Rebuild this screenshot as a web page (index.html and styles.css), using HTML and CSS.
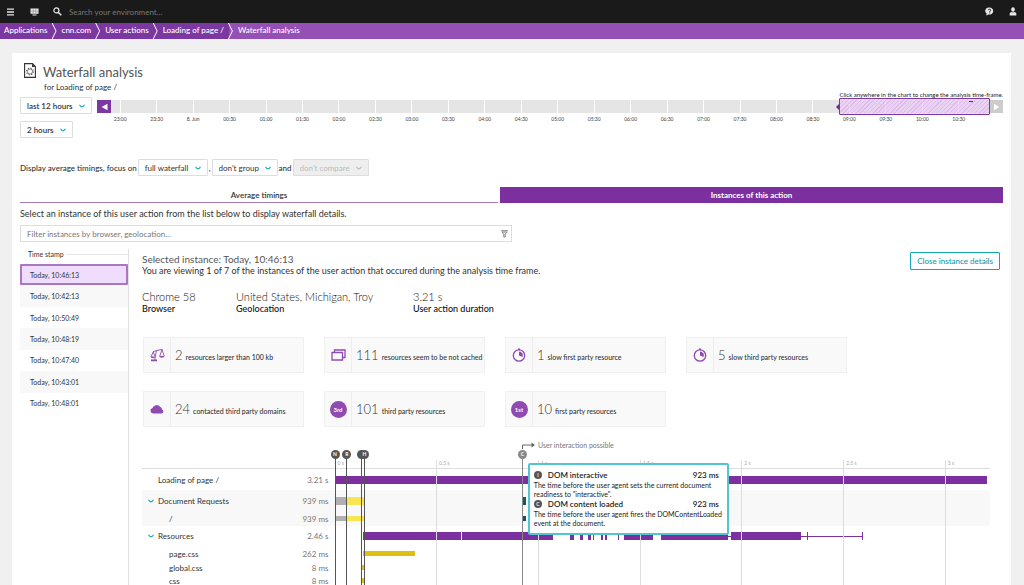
FILE: index.html
```html
<!DOCTYPE html>
<html lang="en">
<head>
<meta charset="utf-8">
<title>Waterfall analysis</title>
<link rel="stylesheet" href="styles.css">
</head>
<body>
<svg class="defs" aria-hidden="true">
  <symbol id="chev" viewBox="0 0 6 4"><path d="M.5.8Q1.6 2.9 3 2.9T5.500.8" fill="none" stroke="currentColor" stroke-width="1.100"/></symbol>
  <symbol id="clock" viewBox="0 0 14 14"><circle cx="7" cy="7.500" r="5.700" fill="none" stroke="currentColor" stroke-width="1.300"/><path d="M6 .5h2v1.500H6z" fill="currentColor"/><path d="M7 3.500v4l3.600 1.500A4 4 0 0 0 7 3.500z" fill="currentColor"/></symbol>
</svg>

<header class="topbar">
  <button class="icon-btn" aria-label="Menu"><svg width="8" height="8" viewBox="0 0 8 8"><path d="M0 1.200h7M0 4h7M0 6.800h7" stroke="currentColor" stroke-width="1.300"/></svg></button>
  <button class="icon-btn dash" aria-label="Dashboards"><svg width="9" height="8" viewBox="0 0 9 8"><path d="M.5.5h8v5.200h-8zM2.500 6.600h4v1h-4z" fill="currentColor"/><path d="M3.200.5v5M5.800.5v5M.5 3.200h8" stroke="#777" stroke-width=".5"/></svg></button>
  <label class="search"><svg width="9" height="9" viewBox="0 0 9 9"><circle cx="3.400" cy="3.400" r="2.500" fill="none" stroke="currentColor" stroke-width="1.200"/><path d="M5.200 5.200 8.300 8.300" stroke="currentColor" stroke-width="1.500"/></svg><input type="text" placeholder="Search your environment..." aria-label="Search your environment"></label>
  <button class="icon-btn" aria-label="Help"><svg width="9" height="9" viewBox="0 0 9 9"><path d="M4.500.5a3.800 3.500 0 1 1-1 6.900L1.200 8.500l.4-2A3.600 3.400 0 0 1 4.500.5z" fill="currentColor"/><path d="M3.300 3.200c0-1.500 2.500-1.400 2.400 0 0 .8-1.100.8-1.100 1.700M4.600 5.400v.9" fill="none" stroke="#1a1a1a" stroke-width=".9"/></svg></button>
  <button class="icon-btn user" aria-label="Account"><svg width="8" height="9" viewBox="0 0 8 9"><ellipse cx="4" cy="2.500" rx="1.800" ry="2.200" fill="currentColor"/><path d="M.7 8.500V6.300Q1 5.200 2.700 5q1.300.8 2.600 0Q7 5.200 7.300 6.300v2.200z" fill="currentColor"/></svg></button>
</header>

<nav class="crumbs" aria-label="Breadcrumb">
  <a href="#">Applications</a><a href="#">cnn.com</a><a href="#">User actions</a><a href="#">Loading of page /</a><a href="#" class="current">Waterfall analysis</a>
</nav>

<main class="panel">
  <div class="title">
    <svg width="12" height="15" viewBox="0 0 12 15"><path d="M.6.6h7.800l3 3v10.800H.6z" fill="none" stroke="#333" stroke-width="1.100"/><path d="M8 .6v3.400h3.400z" fill="#333"/><circle cx="6" cy="8.500" r="2.500" fill="none" stroke="#555" stroke-width=".7"/><circle cx="6" cy="8.500" r="3.400" fill="none" stroke="#555" stroke-width="1.100" stroke-dasharray="1.300 1.370"/></svg>
    <div><h1>Waterfall analysis</h1><p>for Loading of page /</p></div>
  </div>

  <section class="timeframe">
    <div class="ranges">
      <button class="drop">last 12 hours <svg width="6" height="4"><use href="#chev"/></svg></button>
      <button class="drop">2 hours <svg width="6" height="4"><use href="#chev"/></svg></button>
    </div>
    <div class="timeline">
      <button class="step" aria-label="Earlier"><svg width="7" height="8" viewBox="0 0 7 8"><path d="M6.500.8v6.400L.5 4z" fill="currentColor"/></svg></button>
      <div class="track">
        <ol class="ticks"><li>23:00</li><li>23:30</li><li>8. Jun</li><li>00:30</li><li>01:00</li><li>01:30</li><li>02:00</li><li>02:30</li><li>03:00</li><li>03:30</li><li>04:00</li><li>04:30</li><li>05:00</li><li>05:30</li><li>06:00</li><li>06:30</li><li>07:00</li><li>07:30</li><li>08:00</li><li>08:30</li><li>09:00</li><li>09:30</li><li>10:00</li><li>10:30</li></ol>
        <div class="selection"><span class="handle"></span><span class="event"></span></div>
      </div>
      <button class="step off" aria-label="Later"><svg width="7" height="8" viewBox="0 0 7 8"><path d="M1 .8v6.400L6 4z" fill="currentColor"/></svg></button>
      <p class="hint">Click anywhere in the chart to change the analysis time-frame.</p>
    </div>
  </section>

  <form class="focus">
    <label for="f">Display average timings, focus on</label>
    <span class="pick wide"><select id="f"><option>full waterfall</option></select><svg width="6" height="4"><use href="#chev"/></svg></span>
    <label for="g">,</label>
    <span class="pick mid"><select id="g"><option>don't group</option></select><svg width="6" height="4"><use href="#chev"/></svg></span>
    <label for="c">and</label>
    <span class="pick last"><select id="c" disabled><option>don't compare</option></select><svg width="6" height="4"><use href="#chev"/></svg></span>
  </form>

  <div class="tabs" role="tablist">
    <button role="tab" aria-selected="false">Average timings</button>
    <button role="tab" aria-selected="true">Instances of this action</button>
  </div>

  <p class="lead">Select an instance of this user action from the list below to display waterfall details.</p>
  <div class="filter"><input type="text" placeholder="Filter instances by browser, geolocation..." aria-label="Filter instances"><svg width="7" height="8" viewBox="0 0 7 8"><path d="M0 .7h7M1 2h5L4.200 4.200v2.800H2.800V4.200z" fill="none" stroke="#777" stroke-width=".9"/></svg></div>

  <div class="split">
    <aside>
      <h2>Time stamp</h2>
      <ul class="stamps">
        <li class="on">Today, 10:46:13</li><li>Today, 10:42:13</li><li>Today, 10:50:49</li><li>Today, 10:48:19</li><li>Today, 10:47:40</li><li>Today, 10:43:01</li><li>Today, 10:48:01</li>
      </ul>
    </aside>

    <section class="detail">
      <div class="head">
        <div><h3>Selected instance: Today, 10:46:13</h3><p>You are viewing 1 of 7 of the instances of the user action that occured during the analysis time frame.</p></div>
        <button class="close">Close instance details</button>
      </div>

      <dl class="facts">
        <div><dd>Chrome 58</dd><dt>Browser</dt></div>
        <div><dd>United States, Michigan, Troy</dd><dt>Geolocation</dt></div>
        <div><dd>3.21 s</dd><dt>User action duration</dt></div>
      </dl>

      <div class="cards">
        <div class="card"><span class="ico"><svg width="15" height="14" viewBox="0 0 15 14"><path d="M3 3.600 12.200 1.300M6.300 2.800 4.800 12M3.200 3.800 1 9M3.200 3.800 4.800 8M12 1.500 9.800 8M12 1.500 14.200 8" fill="none" stroke="currentColor" stroke-width=".9"/><path d="M.5 8.500h4.700q-.4 1.800-2.300 1.800T.5 8.500zM9 8h5.600q-.4 1.700-2.800 1.700T9 8zM1 11.500h6v1.700H1z" fill="currentColor"/></svg></span><p><b>2</b> resources larger than 100 kb</p></div>
        <div class="card"><span class="ico"><svg width="15" height="12" viewBox="0 0 15 12"><path d="M1 3.500h10.500v7.500H1zM3.500 3V1H14v7.500h-2" fill="none" stroke="currentColor" stroke-width="1.300"/></svg></span><p><b>111</b> resources seem to be not cached</p></div>
        <div class="card"><span class="ico"><svg width="14" height="14"><use href="#clock"/></svg></span><p><b>1</b> slow first party resource</p></div>
        <div class="card"><span class="ico"><svg width="14" height="14"><use href="#clock"/></svg></span><p><b>5</b> slow third party resources</p></div>
        <div class="card"><span class="ico"><svg width="14" height="10" viewBox="0 0 14 10"><path d="M3.200 9.500A2.800 2.800 0 0 1 2.500 4 A4.200 4 0 0 1 10 2.800 3 3 0 0 1 12 5.500 2.100 2.100 0 0 1 11.800 9.500z" fill="currentColor"/></svg></span><p><b>24</b> contacted third party domains</p></div>
        <div class="card"><span class="ico"><span class="disc">3rd</span></span><p><b>101</b> third party resources</p></div>
        <div class="card"><span class="ico"><span class="disc">1st</span></span><p><b>10</b> first party resources</p></div>
      </div>

      <div class="waterfall">
        <div class="rows">
          <div class="axis"></div>
          <div class="row tall"><span class="name">Loading of page /</span><span class="ms">3.21 s</span><div class="lane"><i class="bar" style="left:0%;width:99.500%"></i></div></div>
          <div class="row tall alt"><span class="name"><svg width="6" height="4"><use href="#chev"/></svg>Document Requests</span><span class="ms">939 ms</span><div class="lane"><i class="bar wait" style="left:0%;width:1.800%"></i><i class="bar net" style="left:1.800%;width:2.700%"></i><i class="bar late" style="left:28.700%;width:.5%"></i></div></div>
          <div class="row sub alt"><span class="name">/</span><span class="ms">939 ms</span><div class="lane thin"><i class="bar wait" style="left:0%;width:1.800%"></i><i class="bar net" style="left:1.800%;width:2.700%"></i><i class="bar late" style="left:28.700%;width:.5%"></i></div></div>
          <div class="row res"><span class="name"><svg width="6" height="4"><use href="#chev"/></svg>Resources</span><span class="ms">2.46 s</span><div class="lane"><i class="range" style="left:60%;width:20.500%"></i><i class="bar" style="left:4.300%;width:15%"></i><i class="bar" style="left:19.500%;width:13.800%"></i><i class="bar" style="left:36%;width:.5%"></i><i class="bar" style="left:37.500%;width:.4%"></i><i class="bar" style="left:38.700%;width:.4%"></i><i class="bar" style="left:39.500%;width:.15%"></i><i class="bar" style="left:40.600%;width:.4%"></i><i class="bar" style="left:41.300%;width:.2%"></i><i class="bar" style="left:43.300%;width:.15%"></i><i class="bar" style="left:44.200%;width:4.400%"></i><i class="bar" style="left:49.800%;width:10.300%"></i><i class="bar" style="left:60.500%;width:10.600%"></i><i class="bar" style="left:72.100%;width:.15%"></i><i class="bar" style="left:80.400%;width:.15%"></i></div></div>
          <div class="row sub"><span class="name">page.css</span><span class="ms">262 ms</span><div class="lane thin"><i class="bar css" style="left:4.300%;width:8%"></i></div></div>
          <div class="row leaf"><span class="name">global.css</span><span class="ms">8 ms</span><div class="lane thin"><i class="bar css" style="left:4.100%;width:.6%"></i></div></div>
          <div class="row leaf"><span class="name">css</span><span class="ms">8 ms</span><div class="lane thin"><i class="bar css" style="left:4.100%;width:.6%"></i></div></div>
        </div>
        <div class="plot">
          <span class="grid" style="left:0%">0 s</span><span class="grid" style="left:15.500%">0.5 s</span><span class="grid" style="left:31.050%">1 s</span><span class="grid" style="left:46.600%">1.5 s</span><span class="grid" style="left:62.050%">2 s</span><span class="grid" style="left:77.600%">2.5 s</span><span class="grid" style="left:93.100%">3 s</span>
          <span class="mark" style="left:0%"><b>N</b></span><span class="mark" style="left:1.800%"><b>R</b></span><span class="mark" style="left:4.100%"><b></b></span><span class="mark" style="left:4.500%"><b>H</b></span><span class="mark soft" style="left:28.600%"><b>C</b></span>
          <div class="possible" style="left:28.600%"><svg width="14" height="8" viewBox="0 0 14 8"><path d="M.5 8V4H11" fill="none" stroke="#666" stroke-width="1"/><path d="M9.500 1.600 13 4 9.500 6.400z" fill="#666"/></svg>User interaction possible</div>
          <div class="tip" role="tooltip" style="left:29.500%">
            <h4><span class="dot">I</span>DOM interactive<em>923 ms</em></h4>
            <p>The time before the user agent sets the current document readiness to "interactive".</p>
            <h4><span class="dot">C</span>DOM content loaded<em>923 ms</em></h4>
            <p>The time before the user agent fires the DOMContentLoaded event at the document.</p>
          </div>
        </div>
      </div>
    </section>
  </div>
</main>
</body>
</html>
```
FILE: styles.css
```css
* { box-sizing: border-box; margin: 0; padding: 0; }
html, body { height: 100%; }
body { font: 8px/10px Lato, "Open Sans", sans-serif; color: #333; background: #f0f0f0; display: flex; flex-direction: column; overflow: hidden; }
button, input, select { font: inherit; color: inherit; border: 0; background: none; }
svg { flex: none; display: block; }
ul, ol { list-style: none; }
.defs { position: absolute; width: 0; height: 0; }

.topbar { flex: none; display: flex; align-items: center; height: 23px; padding: 0 7px; background: #1a1a1a; color: #e6e6e6; }
.icon-btn { display: flex; }
.icon-btn.dash { margin-left: 15px; }
.icon-btn.user { margin-left: 15px; }
.search { flex: 1; display: flex; align-items: center; gap: 7px; margin-left: 14px; }
.search input { flex: 1; outline: 0; }
.search input::placeholder { color: #777; }

.crumbs { flex: none; display: flex; height: 16px; background: #9450b5; color: #fff; font-weight: 500; line-height: 15px; }
.crumbs a { position: relative; padding: 0 5px 0 9px; color: inherit; text-decoration: none; background: #7c38a1; }
.crumbs a:first-child { padding-left: 4px; }
.crumbs a::before { content: ""; position: absolute; z-index: 1; left: -1px; top: 0; width: 5px; height: 16px; background: #fff; clip-path: polygon(0 0, 1px 0, 5px 50%, 1px 100%, 0 100%, 4px 50%); }
.crumbs a:first-child::before { display: none; }
.crumbs .current { background: #9450b5; }

.panel { flex: 1; min-height: 0; display: flex; flex-direction: column; margin: 14px 13px 0 12px; padding: 10px 8px 0; background: #fff; }
.title { display: flex; gap: 7px; padding-left: 4px; }
h1 { font-size: 13px; line-height: 19px; font-weight: 400; color: #555; }
.title p { line-height: 10px; padding-left: 1px; }

.timeframe { display: flex; gap: 5px; margin-top: 5px; }
.ranges { display: flex; flex-direction: column; align-items: flex-start; gap: 7px; width: 72px; }
.drop { display: flex; align-items: center; gap: 6px; height: 17px; padding: 0 6px; border: 1px solid #ddd; border-radius: 1px; font-weight: 600; white-space: nowrap; }
.drop svg, .pick svg, .name svg { color: #14a8b5; }
.timeline { position: relative; flex: 1; display: flex; align-items: flex-start; padding-top: 3px; }
.step { flex: none; display: flex; align-items: center; justify-content: center; width: 14px; height: 13px; background: #7c38a1; color: #fff; }
.step.off { width: 13px; background: #ccc; }
.track { position: relative; flex: 1; height: 13px; background: #e5e5e5; }
.ticks { display: grid; grid-template-columns: repeat(24, 1fr); margin: 0 13px 0 -9px; font-size: 5px; line-height: 6px; text-align: center; color: #444; }
.ticks li { padding-top: 16px; background: linear-gradient(#fff, #fff) top / 1px 13px no-repeat; }
.selection { position: absolute; right: 0; top: -2px; width: 17.200%; height: 17px; border: 1px solid #7c38a1; border-radius: 1px; background: repeating-linear-gradient(135deg, #dca9eeaa 0 1px, #ecc9f9aa 1px 3px); }
.handle { position: absolute; left: -4px; top: 5px; border: 3px solid transparent; border-right-color: #6b2a91; border-left: 0; }
.event { position: absolute; right: 16px; top: 2px; width: 4px; height: 1px; background: #444; }
.hint { position: absolute; right: 0; top: -6px; font-size: 6px; line-height: 8px; color: #222; }

.focus { display: flex; align-items: center; margin-top: 21px; font-weight: 500; }
.pick { position: relative; margin: 0 1px; font-weight: 400; }
.pick select { appearance: none; width: 100%; height: 17px; padding: 0 6px; border: 1px solid #ddd; border-radius: 1px; }
.pick svg { position: absolute; right: 7px; top: 7px; }
.pick.wide { width: 70px; }
.pick.mid { width: 66px; }
.pick.last { width: 76px; }
.pick select:disabled { background: #eee; color: #bbb; opacity: 1; }
.pick.last svg { color: #bbb; }

.tabs { display: grid; grid-template-columns: 478fr 503fr; gap: 2px; margin-top: 11px; }
.tabs button { height: 16px; font-weight: 600; border-bottom: 1px solid #a77bbd; }
.tabs button[aria-selected="true"] { background: #7c2f9f; border-color: #7c2f9f; color: #fff; font-weight: 700; }
.lead { margin-top: 5px; font-size: 9px; line-height: 12px; }
.filter { display: flex; align-items: center; width: 50%; height: 17px; margin-top: 5px; padding: 0 3px 0 6px; border: 1px solid #ddd; }
.filter input { flex: 1; outline: 0; }
.filter input::placeholder { color: #777; }

.split { flex: 1; min-height: 0; display: flex; margin-top: 7px; }
aside { flex: none; width: 109px; border-right: 1px solid #e0e0e0; }
h2 { display: flex; align-items: center; gap: 2px; padding-left: 8px; font-size: 7px; line-height: 10px; font-weight: 400; }
h2::after { content: ""; flex: 1; height: 1px; background: #e8e8e8; }
.stamps { display: grid; grid-template-rows: repeat(7, 1fr); height: 150px; margin-top: 5px; font-size: 7px; }
.stamps li { display: flex; align-items: center; padding-left: 10px; }
.stamps li:nth-child(even) { background: #f8f8f8; }
.stamps .on { padding-left: 8px; background: #f0dcfc; border: 2px solid #a877c0; border-radius: 1px; }

.detail { flex: 1; min-width: 0; padding: 4px 13px 0 13px; }
.head { display: flex; justify-content: space-between; align-items: flex-start; }
.head p { font-size: 9px; line-height: 12px; }
h3 { font-size: 10px; line-height: 12px; font-weight: 400; color: #555; }
.close { height: 18px; margin: -1px -10px 0 0; padding: 0 6px; border: 1px solid #14a8b5; border-radius: 1px; color: #0f9aa7; font-weight: 500; }
.facts { display: grid; grid-template-columns: 94px 177px auto; margin-top: 13px; }
.facts dd { font-size: 11px; line-height: 13px; font-weight: 300; color: #111; }
.facts dt { font-size: 9px; line-height: 11px; font-weight: 500; color: #111; }
.cards { display: grid; grid-template-columns: repeat(4, 161px); gap: 18px 20px; margin: 23px 0 0 1px; }
.card { display: flex; height: 36px; background: #f9f9f9; border: 1px solid #f0f0f0; }
.ico { flex: none; display: flex; align-items: center; justify-content: center; width: 27px; border-right: 1px solid #eee; color: #8f4bb0; }
.card p { display: flex; align-items: baseline; gap: 3px; padding-left: 4px; font-size: 7px; line-height: 34px; font-weight: 500; white-space: nowrap; }
.card b { font-size: 13px; font-weight: 300; }
.disc { width: 17px; border-radius: 50%; background: #8f4bb0; color: #fff; font-size: 6px; line-height: 17px; font-weight: 700; text-align: center; }

.waterfall { position: relative; margin-top: 14px; }
.axis { height: 28px; border-bottom: 1px solid #ddd; }
.row { display: flex; align-items: center; }
.row.tall { height: 21px; }
.row.sub { height: 15px; }
.row.res { height: 20px; }
.row.leaf { height: 13px; }
.row.alt { background: #f8f8f8; }
.name { display: flex; align-items: center; gap: 4px; flex: 1; padding-left: 16px; }
.name:has(svg) { padding-left: 6px; }
.sub .name, .leaf .name { padding-left: 27px; }
.ms { padding-right: 6px; color: #777; }
.lane { position: relative; width: 77.300%; height: 8px; }
.lane.thin { height: 5px; }
.bar, .range { position: absolute; top: 0; bottom: 0; background: #7c2f9f; }
.range { top: 4px; bottom: 3px; }
.wait { background: #b0b0b0; }
.net { background: #f8e552; }
.late { background: #125b5b; }
.css { background: #dfbf12; }
.plot { position: absolute; top: 0; right: 0; bottom: 0; width: 77.300%; }
.grid { position: absolute; top: 19px; bottom: 0; padding-left: 2px; border-left: 1px solid #ddd; font-size: 5px; line-height: 7px; color: #aaa; }
.mark { position: absolute; top: 10px; bottom: 0; width: 1px; background: #555; }
.mark b { position: absolute; top: -1px; left: -4px; width: 9px; height: 9px; border-radius: 50%; background: #555; color: #fff; font-size: 5px; line-height: 9px; text-align: center; }
.mark.soft { background: #888; }
.mark.soft b { background: #888; }
.possible { position: absolute; top: 0; display: flex; gap: 2px; font-size: 7px; line-height: 8px; color: #777; white-space: nowrap; }
.tip { position: absolute; top: 22px; width: 201px; padding: 5px 8px 5px 4px; background: #fff; border: 2px solid #52c6d0; border-radius: 2px; color: #222; font-size: 7px; line-height: 9px; }
.tip p { margin-right: -8px; padding-top: 1px; }
.tip h4 { display: flex; align-items: center; font-size: 8px; line-height: 10px; font-weight: 600; }
.tip em { margin-left: auto; font-style: normal; }
.dot { width: 8px; margin-right: 6px; border-radius: 50%; background: #555; color: #fff; font-size: 5px; line-height: 8px; text-align: center; }
```
